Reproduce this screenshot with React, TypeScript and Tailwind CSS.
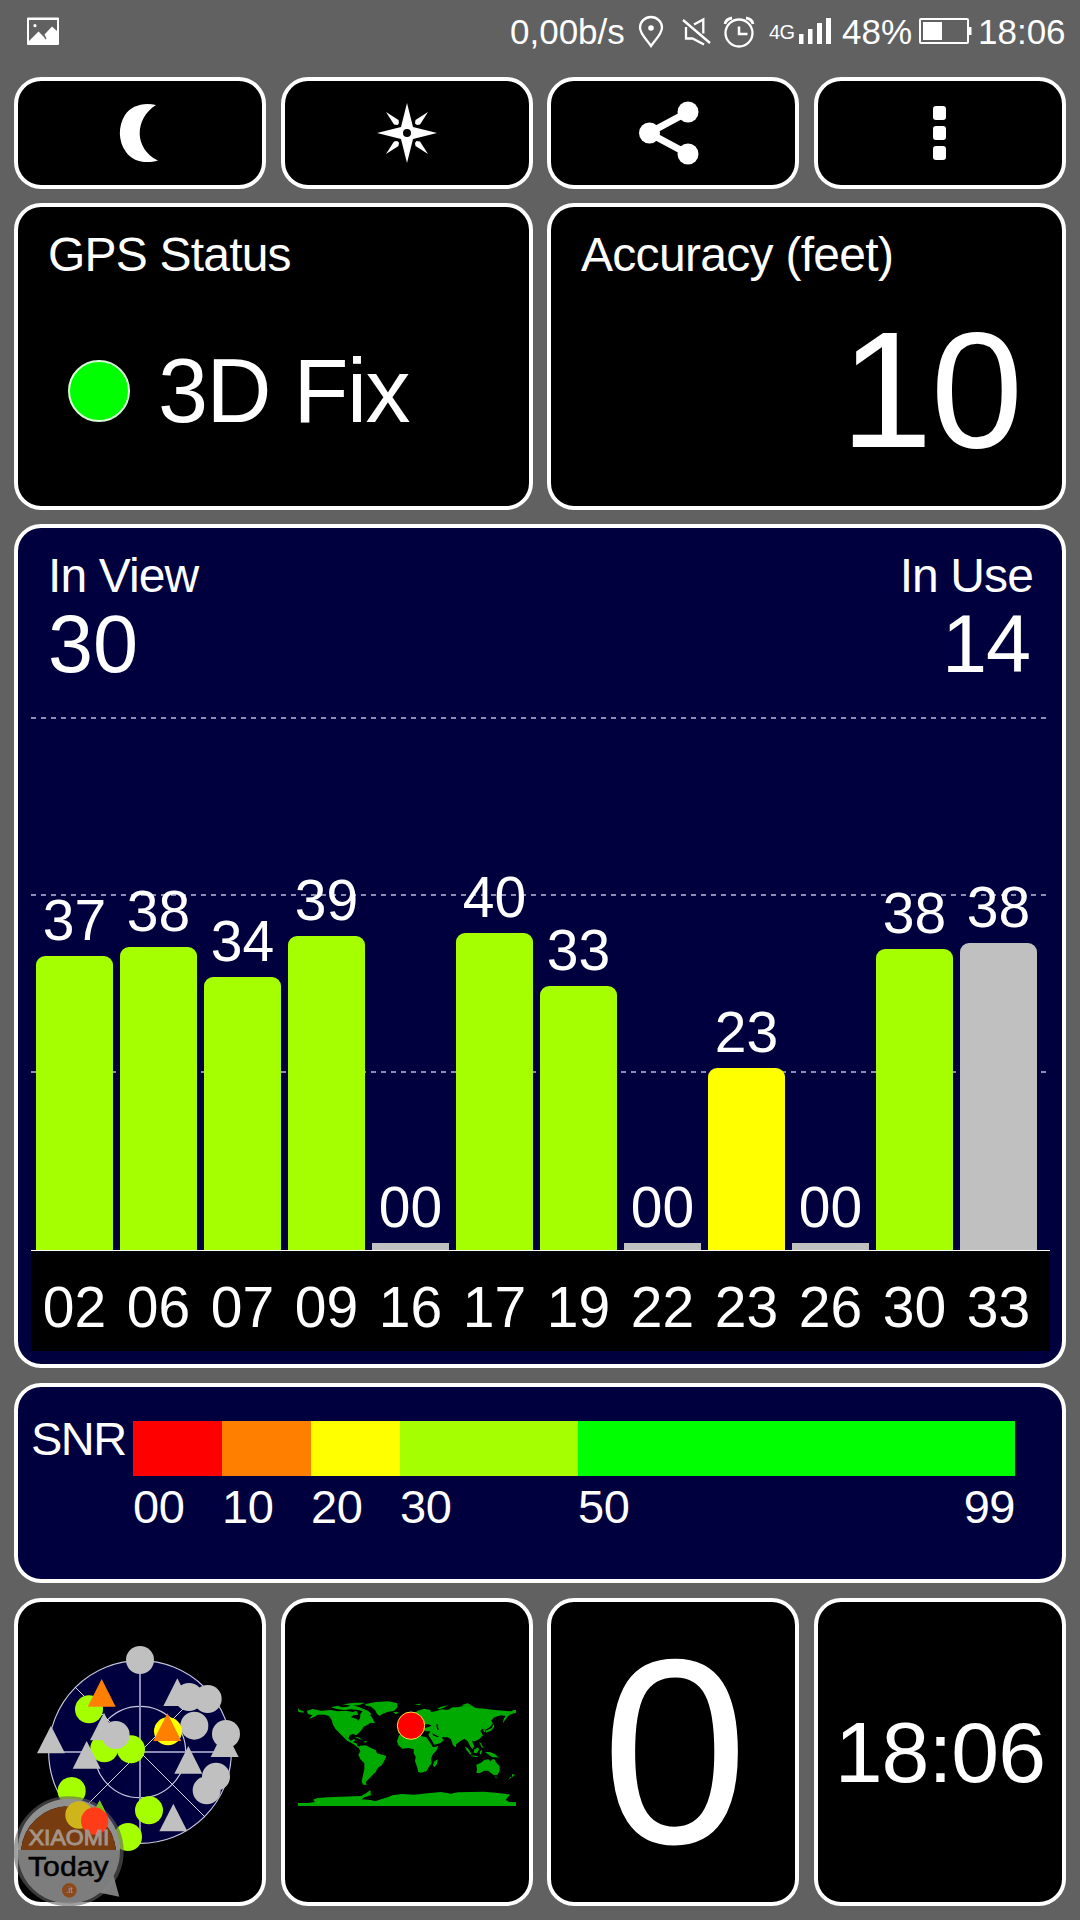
import type { ReactNode } from "react";

interface Satellite {
  id: string;
  snr: string;
  height: number;
  color: string;
}

const LIME = "bg-[#a6ff00]";
const GREY = "bg-[#c0c0c0]";

const SATELLITES: Satellite[] = [
  { id: "02", snr: "37", height: 294, color: LIME },
  { id: "06", snr: "38", height: 303, color: LIME },
  { id: "07", snr: "34", height: 273, color: LIME },
  { id: "09", snr: "39", height: 314, color: LIME },
  { id: "16", snr: "00", height: 7, color: GREY },
  { id: "17", snr: "40", height: 317, color: LIME },
  { id: "19", snr: "33", height: 264, color: LIME },
  { id: "22", snr: "00", height: 7, color: GREY },
  { id: "23", snr: "23", height: 182, color: "bg-[#ffff00]" },
  { id: "26", snr: "00", height: 7, color: GREY },
  { id: "30", snr: "38", height: 301, color: LIME },
  { id: "33", snr: "38", height: 307, color: GREY },
];

const SNR_SCALE = [
  { from: "00", size: "w-[89px]", color: "bg-[#ff0000]" },
  { from: "10", size: "w-[89px]", color: "bg-[#ff8000]" },
  { from: "20", size: "w-[89px]", color: "bg-[#ffff00]" },
  { from: "30", size: "w-[178px]", color: LIME },
  { from: "50", to: "99", size: "w-[437px]", color: "bg-[#00ff00]" },
];

// Sky plot markers in drawing order: [shape, x, y, color]
const MARKERS: [string, number, number, string][] = [
  ["c", 420, 210, "#c0c0c0"],
  ["c", 267, 358, "#a6ff00"],
  ["t", 305, 309, "#ff8000"],
  ["t", 532, 307, "#c0c0c0"],
  ["c", 567, 321, "#c0c0c0"],
  ["c", 623, 327, "#c0c0c0"],
  ["c", 583, 407, "#c0c0c0"],
  ["t", 674, 460, "#c0c0c0"],
  ["c", 678, 432, "#c0c0c0"],
  ["c", 504, 424, "#ffff00"],
  ["t", 502, 412, "#ff8000"],
  ["c", 313, 475, "#a6ff00"],
  ["c", 393, 478, "#a6ff00"],
  ["t", 312, 410, "#c0c0c0"],
  ["c", 347, 435, "#c0c0c0"],
  ["t", 153, 449, "#c0c0c0"],
  ["t", 260, 495, "#c0c0c0"],
  ["t", 565, 510, "#c0c0c0"],
  ["c", 648, 560, "#c0c0c0"],
  ["c", 620, 601, "#c0c0c0"],
  ["c", 215, 603, "#a6ff00"],
  ["t", 299, 673, "#a6ff00"],
  ["c", 237, 675, "#ffff00"],
  ["c", 284, 693, "#ff0000"],
  ["c", 447, 661, "#a6ff00"],
  ["t", 520, 683, "#c0c0c0"],
  ["c", 384, 741, "#a6ff00"],
];

function Card({ className = "", children }: { className?: string; children: ReactNode }) {
  return (
    <div className={`overflow-hidden rounded-[27px] border-4 border-white ${className}`}>{children}</div>
  );
}

function StatusBar() {
  return (
    <div className="flex h-[77px] pt-[10px] text-[35px] leading-[44px] whitespace-nowrap">
      <svg className="ml-[27px] h-10 w-8 shrink-0" viewBox="27 10 32 40">
        <path
          fillRule="evenodd"
          fill="#fff"
          d="M28 17.500h30q1 0 1 1v25.500q0 1-1 1h-30q-1 0-1-1v-25.500q0-1 1-1ZM29 20v21l9.500-9.500 5.500 5.500 1.500 2.500 1-1-2-4 7.500-8 5 4.500v-11ZM35 24a1.500 1.500 0 1 1-.1 3.200A1.500 1.500 0 0 1 35 24Z"
        />
      </svg>
      <span className="ml-[451px] w-[116px] shrink-0">0,00b/s</span>
      <svg className="ml-3 h-10 w-[26px] shrink-0" viewBox="638 10 26 40">
        <path
          d="M651 46C647 40 640 34 640 27.500a11 10.500 0 0 1 22 0C662 34 655 40 651 46Z"
          fill="none"
          stroke="#fff"
          strokeWidth="2.300"
        />
        <circle cx="651" cy="28" r="2.800" fill="#fff" />
      </svg>
      <svg className="ml-[17px] h-10 w-[31px] shrink-0" viewBox="681 10 31 40">
        <g fill="none" stroke="#fff" strokeWidth="2.300">
          <path d="M683 20L710 43M694 24.500L703.300 19.500v14M686 27v11.500h6.500l11.500 6" />
        </g>
      </svg>
      <svg className="ml-[11px] h-10 w-8 shrink-0" viewBox="723 10 32 40">
        <g fill="none" stroke="#fff" strokeWidth="2.300">
          <circle cx="739" cy="33" r="13.500" />
          <path d="M739 26.500v7.500h8.500" strokeWidth="2.500" />
          <path d="M725 24q1-5 7-6M753 24q-1-5-7-6" strokeWidth="2.800" />
        </g>
      </svg>
      <span className="ml-[14px] w-[28px] shrink-0 text-[20px] tracking-[-0.5px]">4G</span>
      <svg className="ml-[1px] h-10 w-9 shrink-0" viewBox="798 10 36 40" fill="#fff">
        <rect x="799" y="34" width="4.500" height="10" />
        <rect x="808" y="29" width="4.500" height="15" />
        <rect x="817" y="23" width="5" height="21" />
        <rect x="826" y="18" width="5" height="26" />
      </svg>
      <span className="ml-2 w-[72px] shrink-0">48%</span>
      <svg className="ml-1 h-10 w-[54px] shrink-0" viewBox="918 10 54 40">
        <rect x="920" y="19" width="48" height="24" rx="1" fill="none" stroke="#fff" strokeWidth="2" />
        <rect x="923" y="22" width="19" height="18" fill="#fff" />
        <rect x="969" y="27" width="2.500" height="8" fill="#fff" />
      </svg>
      <span className="ml-[6px] shrink-0">18:06</span>
    </div>
  );
}

function MoonIcon() {
  return (
    <svg className="h-[104px] w-[244px]" viewBox="18 81 244 104">
      <path d="M156 105C143 102 131 106 125 115C118 126 118 141 126 152C133 162 146 164 158 160.500C134 149 134 119 156 105Z" fill="#fff" />
    </svg>
  );
}

function CompassIcon() {
  return (
    <svg className="h-[104px] w-[244px]" viewBox="-122 -52 244 104">
      <path
        d="M0-30L6-6L30 0L6 6L0 30L-6 6L-30 0L-6-6ZM0-4A4 4 0 1 0 0 4A4 4 0 1 0 0-4Z"
        fill="#fff"
        fillRule="evenodd"
      />
      {["rotate(0)", "rotate(90)", "rotate(180)", "rotate(270)"].map((t) => (
        <path key={t} transform={t} d="M21-21L8.500-13L8-9.500L10-8L13-8.500Z" fill="#fff" />
      ))}
    </svg>
  );
}

function ShareIcon() {
  return (
    <svg className="h-[104px] w-[244px]" viewBox="551 81 244 104">
      <path d="M688 112L649 133L688 154" fill="none" stroke="#fff" strokeWidth="7" />
      <circle cx="649.500" cy="133" r="10.500" fill="#fff" />
      <circle cx="688" cy="112" r="10.500" fill="#fff" />
      <circle cx="688" cy="154" r="10.500" fill="#fff" />
    </svg>
  );
}

function MenuIcon() {
  return (
    <div className="flex flex-col gap-[6px]">
      <span className="h-[14px] w-[13px] rounded-[3px] bg-white" />
      <span className="h-[14px] w-[13px] rounded-[3px] bg-white" />
      <span className="h-[14px] w-[13px] rounded-[3px] bg-white" />
    </div>
  );
}

function Toolbar() {
  const icons = [<MoonIcon />, <CompassIcon />, <ShareIcon />, <MenuIcon />];
  return (
    <div className="grid grid-cols-4 gap-[14.33px]">
      {icons.map((icon, i) => (
        <Card key={i} className="flex h-[112px] items-center justify-center bg-black">
          {icon}
        </Card>
      ))}
    </div>
  );
}

function SignalChart() {
  return (
    <Card className="mt-[14px] h-[844px] bg-[#00003f]">
      <div className="flex justify-between pt-[24px] pr-[29px] pl-[30px]">
        <div>
          <p className="text-[48px] leading-none tracking-[-0.9px]">In View</p>
          <p className="mt-1 text-[81px] leading-none">30</p>
        </div>
        <div className="text-right">
          <p className="text-[48px] leading-none tracking-[-0.9px]">In Use</p>
          <p className="mt-1 mr-[3px] text-[81px] leading-none tracking-[-1px]">14</p>
        </div>
      </div>

      <div className="relative mt-[32px] mr-3 ml-[13px] h-[533px]">
        {/* Grid lines sit behind the bars */}
        <div className="absolute inset-x-0 top-0 mr-[3px] flex flex-col gap-[175px]">
          {[0, 1, 2].map((n) => (
            <div
              key={n}
              className="h-[2px] bg-[repeating-linear-gradient(90deg,#8c8cb4_0px,#8c8cb4_5px,transparent_5px,transparent_10px)]"
            />
          ))}
        </div>
        <div className="relative flex h-full items-end gap-[7px] pl-[5px]">
          {SATELLITES.map((s) => (
            <div key={s.id} className="w-[77px] text-center">
              <p className="mb-[7px] text-[57px] leading-none">{s.snr}</p>
              <div
                className={`${s.height > 10 ? "rounded-t-[9px]" : ""} ${s.color}`}
                style={{ height: s.height }}
              />
            </div>
          ))}
        </div>
      </div>
      <div className="mr-3 ml-[13px] flex h-[101px] gap-[7px] border-t border-white bg-black pt-[28px] pl-[5px]">
        {SATELLITES.map((s) => (
          <p key={s.id} className="w-[77px] text-center text-[57px] leading-none">
            {s.id}
          </p>
        ))}
      </div>
    </Card>
  );
}

function SnrLegend() {
  return (
    <Card className="mt-[15px] flex h-[200px] bg-[#00003f] pl-[13px] text-[47px] leading-none">
      <p className="w-[102px] pt-[28px] tracking-[-1.5px]">SNR</p>
      <div className="flex pt-[34px]">
        {SNR_SCALE.map((s) => (
          <div key={s.from} className={s.size}>
            <div className={`h-[55px] ${s.color}`} />
            <div className="mt-[7px] flex justify-between tracking-[-0.5px]">
              <span>{s.from}</span>
              {s.to && <span>{s.to}</span>}
            </div>
          </div>
        ))}
      </div>
    </Card>
  );
}

function SkyPlot() {
  return (
    <svg className="h-[300px] w-[244px]" viewBox="54 36 732 900">
      <circle cx="420" cy="486" r="274" fill="#00003f" stroke="#c8c8e0" strokeWidth="3.500" />
      <circle cx="420" cy="486" r="137" fill="none" stroke="#c8c8e0" strokeWidth="3.500" />
      <path d="M420 212V760M146 486H694" stroke="#8c8cb4" strokeWidth="6" />
      <path d="M226 292L614 680M614 292L226 680" stroke="#fff" strokeWidth="2.500" />
      {MARKERS.map(([shape, x, y, fill], i) =>
        shape === "c" ? (
          <circle key={i} cx={x} cy={y} r="42" fill={fill} />
        ) : (
          <path key={i} d={`M${x} ${y - 42}L${x + 42} ${y + 41}H${x - 42}Z`} fill={fill} />
        )
      )}
    </svg>
  );
}

function WorldMap() {
  return (
    <svg className="h-[300px] w-[244px]" viewBox="42 36 732 900">
      <g fill="#00aa00">
        {/* North and Central America */}
        <path d="M81 354L86 360L98 364L98 368L82 366ZM108 362L125 357L150 362L180 360L200 364L225 362L246 366L256 362L262 374L246 376L240 382L256 386L262 392L267 385L268 372L276 362L288 368L300 378L306 388L312 400L298 398L290 404L278 410L272 420L262 430L256 436L246 432L236 436L232 446L240 452L250 446L252 452L246 456L256 460L260 468L268 472L262 474L250 464L240 458L228 452L218 442L206 430L194 418L186 404L182 390L174 378L160 374L140 374L128 382L114 386L124 376L110 372Z" />
        <path d="M180 352L200 347L212 352L230 350L240 346L262 350L276 356L290 362L302 372L296 376L280 366L262 360L240 358L220 360L200 358ZM215 343L250 338L282 338L268 344L245 348ZM250 440L262 442L276 450L262 446ZM278 452L290 455L282 458Z" />
        <path d="M284 342L310 337L350 334L378 339L380 350L370 362L350 366L334 372L326 378L318 372L312 360L300 350L282 346Z" />
        <path d="M366 367L378 365L384 369L374 372Z" />
        {/* South America */}
        <path d="M262 472L268 467L284 466L300 474L314 480L318 490L334 494L346 498L340 512L332 526L320 534L314 546L304 556L294 566L284 576L288 584L276 584L272 574L276 556L280 538L280 520L268 508L262 494L268 484Z" />
        {/* Europe and Asia */}
        <path d="M382 430L382 420L395 412L390 402L410 392L420 378L440 362L460 356L478 360L480 366L494 364L512 358L530 360L545 352L560 352L580 347L600 346L614 354L640 356L670 360L700 362L720 364L728 360L735 360L735 368L722 372L714 376L702 390L696 400L698 386L704 378L690 376L670 382L660 392L666 400L656 412L642 420L634 416L628 424L636 436L624 448L612 454L604 452L606 462L610 468L604 478L596 466L590 454L580 446L570 452L556 462L554 472L546 466L540 448L530 442L512 442L518 450L508 460L490 464L480 448L472 434L478 424L462 424L456 416L474 410L464 402L448 410L452 424L444 428L436 416L424 412L412 416L404 424L398 432Z" />
        <path d="M498 356L510 350L532 346L524 350L506 358ZM430 343L452 341L444 346ZM570 346L590 340L602 346L585 348Z" />
        {/* Africa */}
        <path d="M384 436L404 430L420 432L424 440L438 440L450 438L466 442L472 450L480 462L486 472L502 468L496 482L486 492L480 506L482 520L474 530L466 544L450 548L442 546L438 530L432 514L434 500L428 490L428 478L414 474L394 476L382 466L378 454ZM490 514L500 508L498 522L490 532L486 526Z" />
        {/* Islands and Oceania */}
        <path d="M582 470L590 474L602 492L598 494L586 480ZM600 496L622 499L618 502L602 499ZM610 478L622 472L624 480L616 490L608 488ZM628 482L634 480L630 494L626 490ZM642 486L656 486L672 492L684 504L676 502L664 502L650 492ZM624 456L630 460L638 474L632 472ZM636 418L644 422L640 428ZM644 422L662 414L668 402L670 410L660 422L646 428Z" />
        <path d="M616 524L630 518L640 510L652 508L658 514L664 508L670 508L676 518L686 528L686 542L680 554L670 556L660 550L652 542L640 542L626 550L616 548L618 538ZM670 560L678 560L676 564ZM722 552L732 554L724 562ZM718 560L722 562L712 570Z" />
        {/* Antarctica */}
        <path d="M81 648V639L110 639L132 636L126 629L140 624L170 622L210 620L250 619L270 618L285 610L298 600L300 616L280 622L272 628L300 630L312 634L330 628L350 622L364 616L392 612L430 614L470 610L510 606L540 611L560 607L600 606L640 605L680 609L718 614L710 622L704 630L715 636L735 637V648Z" />
      </g>
      <g fill="#000">
        <path d="M462 404L472 402L482 407L472 411L462 410ZM496 402L502 404L500 410L504 418L500 420L497 412ZM468 436L484 458L488 464L482 462L466 440ZM484 430L504 440L500 442L486 436Z" />
      </g>
      <circle cx="420" cy="407" r="41" fill="#ff0000" stroke="#ffe040" strokeWidth="3" />
    </svg>
  );
}

function Watermark() {
  return (
    <svg
      className="absolute top-[1790px] left-0 h-[130px] w-[133px]"
      viewBox="0 600 399 390"
      fontFamily="Liberation Sans, sans-serif"
    >
      <circle cx="206" cy="784" r="159" fill="none" stroke="#606060" strokeOpacity="0.6" strokeWidth="12" />
      <path d="M53 780A153 153 0 0 0 300 908L358 920L341 858A153 153 0 0 0 360 780Z" fill="#848484" fillOpacity="0.95" />
      <path d="M53 780A153 153 0 0 1 360 780H348A143 143 0 0 0 63 780Z" fill="#909090" />
      <path d="M63 780A143 143 0 0 1 348 780Z" fill="#7c3e12" fillOpacity="0.97" />
      <circle cx="237" cy="675" r="41" fill="#d0b41c" />
      <circle cx="284" cy="693" r="41" fill="#ff3c18" />
      <path d="M299 632L318 670Q300 652 288 652Z" fill="#7cc01c" />
      <text x="86" y="766" fontSize="68" textLength="242" lengthAdjust="spacingAndGlyphs" fill="#a49488" stroke="#a49488" strokeWidth="3">
        XIAOMI
      </text>
      <text x="84" y="859" fontSize="84" textLength="242" lengthAdjust="spacingAndGlyphs" fill="#000" stroke="#000" strokeWidth="1.500">
        Today
      </text>
      <circle cx="208" cy="901" r="22" fill="#8c4a1c" />
      <text x="208" y="910" fontSize="26" textAnchor="middle" fill="#b0a098">
        .it
      </text>
    </svg>
  );
}

export default function App() {
  return (
    <div className="relative h-[1920px] w-[1080px] overflow-hidden bg-[#616161] font-['Liberation_Sans',Arial,sans-serif] text-white">
      <StatusBar />
      <div className="mr-[14px] ml-[14px]">
        <Toolbar />

        <div className="mt-[14px] grid grid-cols-2 gap-[14px]">
          <Card className="h-[307px] bg-black pt-[24px] pl-[30px]">
            <p className="text-[48px] leading-none tracking-[-0.8px]">GPS Status</p>
            <div className="mt-[67px] ml-5 flex items-center gap-7">
              <span className="h-[62px] w-[62px] rounded-full border-2 border-[#d8ffd8] bg-[#00ff00]" />
              <p className="text-[90px] leading-none tracking-[-1.5px]">3D Fix</p>
            </div>
          </Card>
          <Card className="h-[307px] bg-black pt-[24px] pr-[41px] pl-[30px]">
            <p className="text-[48px] leading-none tracking-[-0.7px]">Accuracy (feet)</p>
            <p className="mt-[28px] text-right text-[166px] leading-none tracking-[-2px]">10</p>
          </Card>
        </div>

        <SignalChart />
        <SnrLegend />

        <div className="mt-[15px] grid grid-cols-4 gap-[14.33px]">
          <Card className="h-[308px] bg-black">
            <SkyPlot />
          </Card>
          <Card className="h-[308px] bg-black">
            <WorldMap />
          </Card>
          <Card className="h-[308px] bg-black pt-[18px] pl-[3px] text-center text-[264px] leading-none">0</Card>
          <Card className="h-[308px] bg-black pt-[107px] text-center text-[86px] leading-none tracking-[-1px]">18:06</Card>
        </div>
      </div>
      <Watermark />
    </div>
  );
}
